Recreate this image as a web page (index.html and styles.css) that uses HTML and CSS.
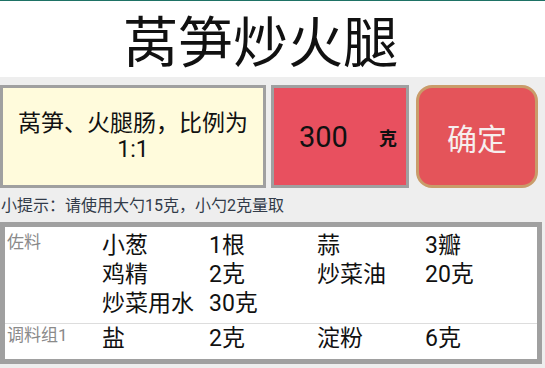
FILE: index.html
```html
<!DOCTYPE html>
<html lang="zh-CN">
<head>
  <meta charset="UTF-8">
  <meta name="viewport" content="width=device-width, initial-scale=1">
  <title>莴笋炒火腿</title>
  <link rel="stylesheet" href="styles.css">
</head>
<body>
  <!-- 标题 -->
  <header class="title-bar">莴笋炒火腿</header>

  <!-- 主料 / 重量 / 确定 -->
  <div class="top-row">
    <div class="main-box">莴笋、火腿肠，比例为<br>1:1</div>
    <div class="weight-box">
      <span class="weight-num">300</span>
      <span class="weight-unit">克</span>
    </div>
    <button class="ok-btn">确定</button>
  </div>

  <p class="hint">小提示：请使用大勺15克，小勺2克量取</p>

  <!-- 调料表 -->
  <div class="season-table">
    <div class="group">
      <div class="group-label">佐料</div>
      <div class="group-items">
        <span>小葱</span><span>1根</span><span>蒜</span><span>3瓣</span>
        <span>鸡精</span><span>2克</span><span>炒菜油</span><span>20克</span>
        <span>炒菜用水</span><span>30克</span>
      </div>
    </div>
    <div class="group last">
      <div class="group-label">调料组1</div>
      <div class="group-items">
        <span>盐</span><span>2克</span><span>淀粉</span><span>6克</span>
      </div>
    </div>
  </div>
</body>
</html>
```

FILE: styles.css
```css
:root {
  --color-bg:     #eeeeee;
  --color-border: #a0a0a0;
  --color-yellow: #fffbdc;
  --color-red:    #e8505f;
  --color-btn:    #e4545a;
  --color-btn-border: #c99c6a;
  --font-base: "Roboto", "Noto Sans CJK SC", sans-serif;
}
*, *::before, *::after { box-sizing: border-box; }
body {
  margin: 0;
  background: var(--color-bg);
  font-family: var(--font-base);
  color: #111;
}

/* 标题 */
.title-bar {
  height: 77px;
  padding: 8px 24px 0 0;
  border-top: 1px solid #1e7265;
  background: #fff;
  text-align: center;
  font-size: 55px;
  line-height: 68px;
}

/* 上段 */
.top-row {
  display: flex;
  height: 103px;
  margin-top: 8px;
}
.main-box {
  width: 266px;
  border: 3px solid var(--color-border);
  background: var(--color-yellow);
  display: flex; align-items: center; justify-content: center;
  text-align: center;
  font-size: 23px;
  line-height: 26px;
}
.weight-box {
  width: 138px;
  margin-left: 5px;
  border: 3px solid var(--color-border);
  background: var(--color-red);
  display: flex; align-items: center;
  padding: 0 9px 0 25px;
}
.weight-num { flex: 1; font-size: 29px; }
.weight-unit { font-size: 18px; font-weight: bold; }
.ok-btn {
  width: 122px;
  margin-left: 7px;
  border: 3px solid var(--color-btn-border);
  border-radius: 16px;
  background: var(--color-btn);
  color: #f6eeee;
  font-family: var(--font-base);
  font-size: 30px;
  padding: 0;
}

/* 小提示 */
.hint {
  margin: 8px 0 6px 1px;
  font-size: 16px;
  line-height: 20px;
  color: #323b49;
}

/* 调料表 */
.season-table {
  width: 542px;
  border: 5px solid var(--color-border);
  background: #fff;
}
.group {
  display: flex;
  padding: 4px 0 5px;
  border-bottom: 1px solid #dddddd;
}
.group.last { border-bottom: none; padding: 0 0 6px; }
.group-label {
  width: 97px;
  padding-left: 2px;
  font-size: 17px;
  line-height: 22px;
  color: #8a8a8a;
}
.group-items {
  display: grid;
  grid-template-columns: 107px 108px 108px 1fr;
  font-size: 23px;
  line-height: 29px;
}
```
